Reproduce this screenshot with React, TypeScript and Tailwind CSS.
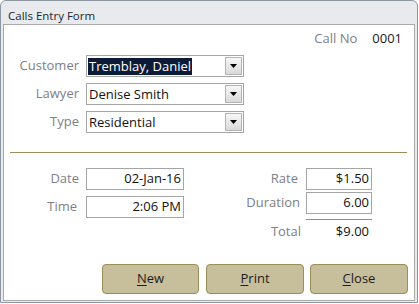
const font = { fontFamily: '"Open Sans", "Noto Sans", sans-serif' };

function Combo({ value, selected }: { value: string; selected?: boolean }) {
  return (
    <div className="flex h-[22px] w-[158px] items-stretch border border-[#a5a5a5] bg-white">
      <div className="flex flex-1 items-center pl-[1px]">
        <span
          className={
            selected
              ? "bg-[#0c1b38] px-[1px] text-[13px] leading-[17px] text-white"
              : "px-[1px] text-[13px] leading-[17px] text-[#111]"
          }
        >
          {value}
        </span>
      </div>
      <div className="m-[1px] flex w-[17px] items-center justify-center border border-[#b4b4b4] bg-gradient-to-b from-[#f7f7f7] to-[#d9d9d9]">
        <svg width="7" height="4" viewBox="0 0 7 4">
          <path d="M0 0h7L3.5 4z" fill="#000" />
        </svg>
      </div>
    </div>
  );
}

function Field({ value, w }: { value: string; w: string }) {
  return (
    <div
      className={`flex h-[22px] items-center justify-end border border-[#a5a5a5] bg-white pr-[2px] text-[13px] text-[#111] ${w}`}
    >
      {value}
    </div>
  );
}

function Btn({ first, rest, w }: { first: string; rest: string; w: string }) {
  return (
    <button
      type="button"
      className={`flex h-[30px] items-center justify-center rounded-[4px] border border-[#998d58] bg-[#c7bf9c] text-[13px] text-[#1c1c1c] ${w}`}
    >
      <span className="underline decoration-1 underline-offset-2">{first}</span>
      {rest}
    </button>
  );
}

export default function App() {
  return (
    <div className="h-[304px] w-[419px] bg-white" style={font}>
      <div className="flex h-[303px] w-[418px] flex-col rounded-t-[6px] border border-[#8d97a2] bg-[#e8eaed] px-[2px] pb-[1px]">
        <div className="h-[23px] pl-[5px] pt-[7px] text-[11.5px] leading-[16px] text-[#1d2733]">
          Calls Entry Form
        </div>
        <div className="flex flex-1 flex-col border border-[#a9a9a9] bg-white">
          <div className="mt-[5px] flex h-[17px] items-center justify-end pr-[12px] text-[13px]">
            <span className="text-[#7d8088]">Call No</span>
            <span className="ml-[15px] text-[#1a1a1a]">0001</span>
          </div>

          <div className="mt-[8px] flex flex-col gap-[6px]">
            {[
              ["Customer", "Tremblay, Daniel", true],
              ["Lawyer", "Denise Smith", false],
              ["Type", "Residential", false],
            ].map(([label, value, sel]) => (
              <div key={label as string} className="flex items-center">
                <span className="w-[75px] text-right text-[13px] text-[#7d8088]">{label as string}</span>
                <div className="ml-[7px]">
                  <Combo value={value as string} selected={sel as boolean} />
                </div>
              </div>
            ))}
          </div>

          <div className="ml-[6px] mr-[7px] mt-[19px] h-px bg-[#9c8f5b]" />

          <div className="mt-[15px] flex">
            <div className="flex flex-col gap-[6px]">
              <div className="flex items-center">
                <span className="w-[75px] text-right text-[13px] text-[#7d8088]">Date</span>
                <div className="ml-[7px]">
                  <Field value="02-Jan-16" w="w-[98px]" />
                </div>
              </div>
              <div className="flex items-center">
                <span className="w-[73px] text-right text-[13px] text-[#7d8088]">Time</span>
                <div className="ml-[9px]">
                  <Field value="2:06 PM" w="w-[98px]" />
                </div>
              </div>
            </div>

            <div className="ml-auto mr-[42px] flex flex-col">
              <div className="flex items-center justify-end">
                <span className="text-[13px] text-[#7d8088]">Rate</span>
                <div className="ml-[8px]">
                  <Field value="$1.50" w="w-[66px]" />
                </div>
              </div>
              <div className="mt-[2px] flex items-center justify-end">
                <span className="text-[13px] text-[#7d8088]">Duration</span>
                <div className="ml-[6px]">
                  <Field value="6.00" w="w-[66px]" />
                </div>
              </div>
              <div className="ml-auto mt-[5px] h-px w-[66px] bg-[#9c8f5b]" />
              <div className="mt-[2px] flex items-center justify-end">
                <span className="text-[13px] text-[#7d8088]">Total</span>
                <span className="ml-[5px] w-[66px] pr-[3px] text-right text-[13px] text-[#111]">$9.00</span>
              </div>
            </div>
          </div>

          <div className="mt-auto mb-[6px] flex justify-end pr-[6px]">
            <Btn first="N" rest="ew" w="w-[97px]" />
            <div className="ml-[7px]">
              <Btn first="P" rest="rint" w="w-[98px]" />
            </div>
            <div className="ml-[6px]">
              <Btn first="C" rest="lose" w="w-[98px]" />
            </div>
          </div>
        </div>
      </div>
    </div>
  );
}
